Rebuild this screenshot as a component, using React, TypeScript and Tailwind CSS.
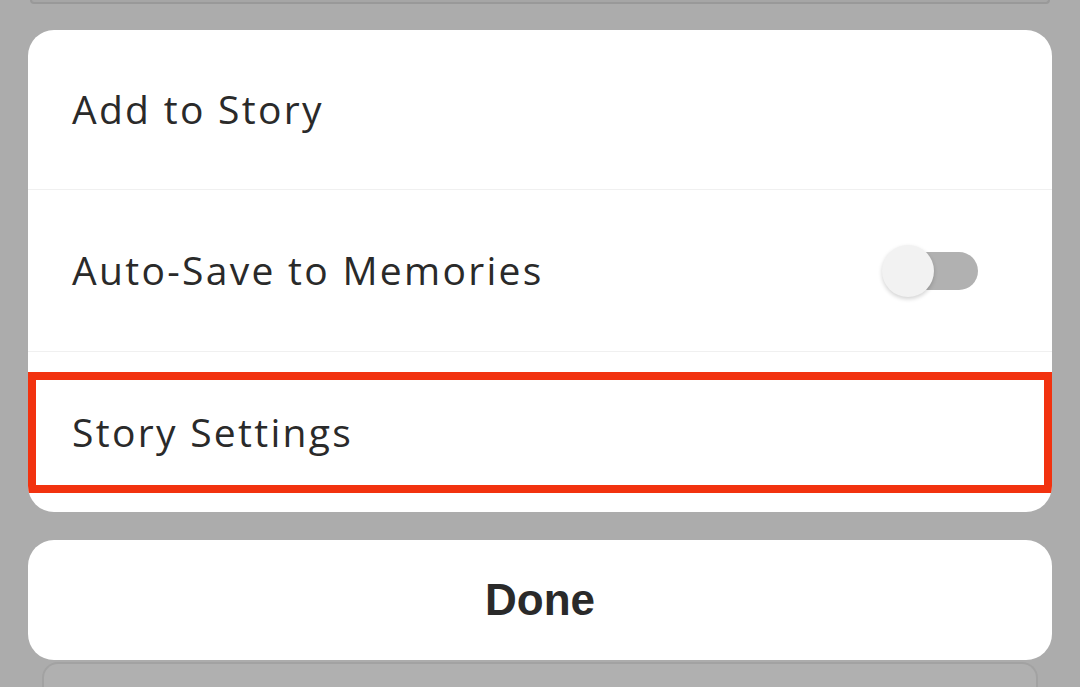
export default function App() {
  return (
    <main
      className="w-[1080px] h-[687px] overflow-hidden bg-[#acacac] flex flex-col items-center"
      style={{ fontFamily: "'Open Sans', Lato, sans-serif" }}
    >
      {/* sheet peeking above */}
      <div className="w-[1020px] h-[4px] shrink-0 bg-[#a6a6a6] rounded-b-[6px] border-b-[2px] border-x-[2px] border-[#999]" />
      <div className="h-[26px] shrink-0" />

      {/* options card */}
      <section className="w-[1024px] h-[482px] shrink-0 bg-white rounded-[26px] overflow-hidden flex flex-col">
        <div className="h-[160px] flex items-center px-[44px] border-b border-[#f0f0f0]">
          <span className="text-[39px] text-[#2a2a2a] tracking-[2.3px]">Add to Story</span>
        </div>
        <div className="h-[162px] flex items-center justify-between px-[44px] border-b border-[#f0f0f0]">
          <span className="text-[39px] text-[#2a2a2a] tracking-[2.3px]">Auto-Save to Memories</span>
          <div className="relative w-[98px] h-[54px] mr-[30px] flex items-center">
            <div className="absolute left-[24px] w-[74px] h-[38px] rounded-full bg-[#b1b1b1]" />
            <div className="absolute left-[2px] w-[52px] h-[52px] rounded-full bg-[#f2f2f2] shadow-[0_2px_4px_rgba(0,0,0,0.18)]" />
          </div>
        </div>
        <div className="flex-1 pt-[20px] pb-[19px]">
          <div className="h-full border-[8px] border-[#f2320f] flex items-center px-[36px]">
            <span className="text-[39px] text-[#2a2a2a] tracking-[2.3px]">Story Settings</span>
          </div>
        </div>
      </section>

      <div className="h-[28px] shrink-0" />

      {/* done button */}
      <button className="w-[1024px] h-[120px] shrink-0 bg-white rounded-[26px] flex items-center justify-center">
        <span
          className="text-[44px] font-bold text-[#2a2a2a]"
          style={{ fontFamily: "'Liberation Sans', Arial, sans-serif" }}
        >
          Done
        </span>
      </button>

      {/* sheet peeking below */}
      <div className="w-[996px] h-[40px] shrink-0 mt-[2px] bg-[#b0b0b0] rounded-t-[16px] border-t-[2px] border-x-[2px] border-[#a2a2a2]" />
    </main>
  );
}
